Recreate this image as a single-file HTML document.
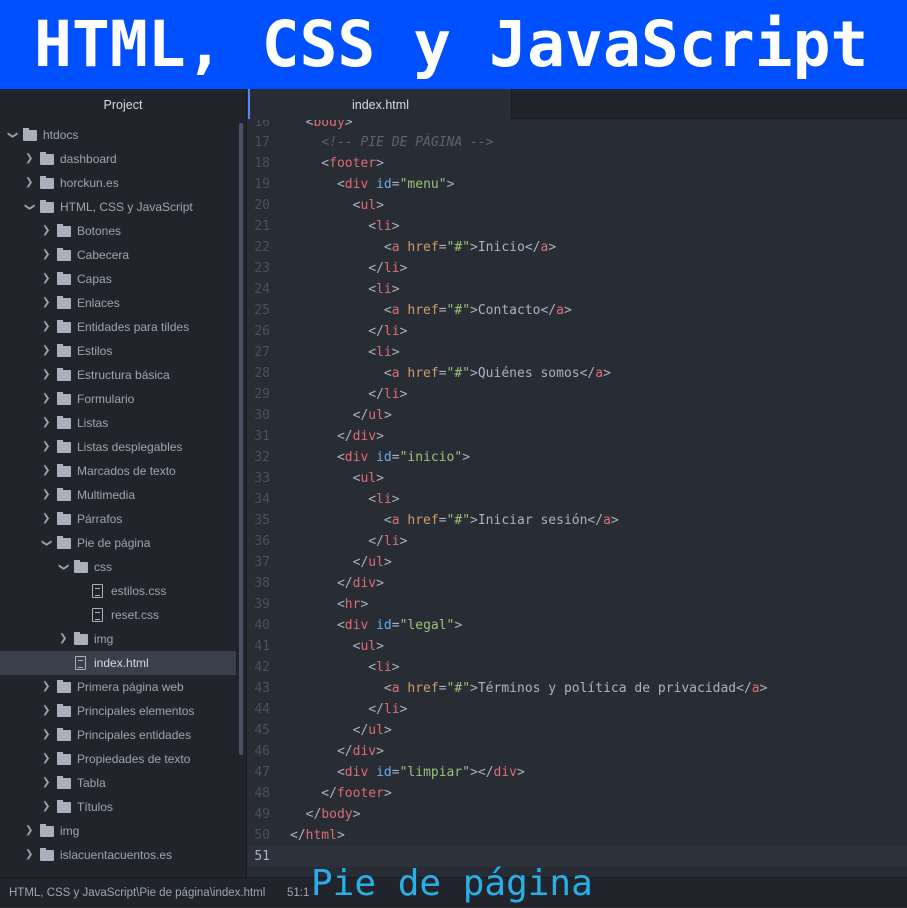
<!DOCTYPE html>
<html><head><meta charset="utf-8"><style>
*{margin:0;padding:0;box-sizing:border-box}
body{width:907px;height:907px;overflow:hidden;background:#282c34;position:relative;font-family:"Liberation Sans",sans-serif}
#top{position:absolute;left:0;top:0;width:907px;height:89px;background:#0050ff;color:#fff;font:bold 63px "DejaVu Sans Mono",monospace;line-height:89px;padding-left:34px;white-space:pre}
#side{position:absolute;left:0;top:89px;width:247px;height:788px;background:#21252b;border-right:1px solid #181a1f}
#side .hd{height:30px;line-height:32px;text-align:center;color:#d7dae0;font-size:12.5px}
.r{position:absolute;left:0;height:24px;width:236px;color:#9da5b4;font-size:12px;line-height:24px;white-space:nowrap}
.r.sel{background:#3a3f4b;color:#d7dae0}
.ar{position:absolute;top:0;color:#9da5b4;font-size:10px}
.fd{position:absolute;top:7px;width:14px;height:11px;background:#a9afbb;border-radius:1px}
.fd:before{content:"";position:absolute;left:0;top:-2px;width:6px;height:3px;background:#a9afbb}
.fl{position:absolute;top:5px;width:11px;height:14px;border:1.3px solid #a9afbb;border-radius:1px}
.fl:after{content:"";position:absolute;left:2px;top:3px;width:5px;height:6px;border-top:1.3px solid #a9afbb;border-bottom:1.3px solid #a9afbb}
.tx{position:absolute;top:0}
#sb{position:absolute;left:239px;top:123px;width:4px;height:632px;background:#4b5263;border-radius:2px}
#tabs{position:absolute;left:248px;top:89px;width:659px;height:30px;background:#21252b}
#tab{position:absolute;left:0;top:0;width:263px;height:30px;background:#282c34;color:#d7dae0;font-size:12.5px;text-align:center;line-height:32px;border-left:2px solid #568af2}
#tabs .rest{position:absolute;left:263px;top:0;right:0;height:30px;border-left:1px solid #181a1f;border-bottom:1px solid #181a1f}
#ed{position:absolute;left:248px;top:120px;width:659px;height:757px;overflow:hidden;font:13px "DejaVu Sans Mono",monospace}
.l{position:absolute;left:0;height:21px;line-height:21px;width:659px;white-space:pre;color:#abb2bf}
.n{position:absolute;left:0;width:22px;text-align:right;color:#495162}
.c{position:absolute;left:42px}
.t{color:#e06c75}.a{color:#d19a66}.i{color:#61afef}.s{color:#98c379}.cm{color:#5c6370;font-style:italic}
.cur{background:#2c313c}.cur .n{color:#abb2bf}
#status{position:absolute;left:0;top:877px;width:907px;height:30px;background:#21252b;border-top:1px solid #181a1f;color:#9da5b4;font-size:11.5px;line-height:30px}
#pie{position:absolute;left:311px;top:860px;color:#29aee8;font:36px "DejaVu Sans Mono",monospace;line-height:48px;white-space:pre}
</style></head><body>
<div id="top">HTML, CSS y JavaScript</div>
<div id="side"><div class="hd">Project</div></div>
<div id="sb"></div>
<div id="tabs"><div id="tab">index.html</div><div class="rest"></div></div>
<div id="rows"></div>
<div id="ed">
<div class="l" style="top:-8px"><span class="n">16</span><span class="c">  &lt;<span class="t">body</span>&gt;</span></div>
<div class="l" style="top:12px"><span class="n">17</span><span class="c">    <span class="cm">&lt;!-- PIE DE PÁGINA --&gt;</span></span></div>
<div class="l" style="top:33px"><span class="n">18</span><span class="c">    &lt;<span class="t">footer</span>&gt;</span></div>
<div class="l" style="top:54px"><span class="n">19</span><span class="c">      &lt;<span class="t">div</span> <span class="i">id</span>=<span class="s">"menu"</span>&gt;</span></div>
<div class="l" style="top:75px"><span class="n">20</span><span class="c">        &lt;<span class="t">ul</span>&gt;</span></div>
<div class="l" style="top:96px"><span class="n">21</span><span class="c">          &lt;<span class="t">li</span>&gt;</span></div>
<div class="l" style="top:117px"><span class="n">22</span><span class="c">            &lt;<span class="t">a</span> <span class="a">href</span>=<span class="s">"#"</span>&gt;Inicio&lt;/<span class="t">a</span>&gt;</span></div>
<div class="l" style="top:138px"><span class="n">23</span><span class="c">          &lt;/<span class="t">li</span>&gt;</span></div>
<div class="l" style="top:159px"><span class="n">24</span><span class="c">          &lt;<span class="t">li</span>&gt;</span></div>
<div class="l" style="top:180px"><span class="n">25</span><span class="c">            &lt;<span class="t">a</span> <span class="a">href</span>=<span class="s">"#"</span>&gt;Contacto&lt;/<span class="t">a</span>&gt;</span></div>
<div class="l" style="top:201px"><span class="n">26</span><span class="c">          &lt;/<span class="t">li</span>&gt;</span></div>
<div class="l" style="top:222px"><span class="n">27</span><span class="c">          &lt;<span class="t">li</span>&gt;</span></div>
<div class="l" style="top:243px"><span class="n">28</span><span class="c">            &lt;<span class="t">a</span> <span class="a">href</span>=<span class="s">"#"</span>&gt;Quiénes somos&lt;/<span class="t">a</span>&gt;</span></div>
<div class="l" style="top:264px"><span class="n">29</span><span class="c">          &lt;/<span class="t">li</span>&gt;</span></div>
<div class="l" style="top:285px"><span class="n">30</span><span class="c">        &lt;/<span class="t">ul</span>&gt;</span></div>
<div class="l" style="top:306px"><span class="n">31</span><span class="c">      &lt;/<span class="t">div</span>&gt;</span></div>
<div class="l" style="top:327px"><span class="n">32</span><span class="c">      &lt;<span class="t">div</span> <span class="i">id</span>=<span class="s">"inicio"</span>&gt;</span></div>
<div class="l" style="top:348px"><span class="n">33</span><span class="c">        &lt;<span class="t">ul</span>&gt;</span></div>
<div class="l" style="top:369px"><span class="n">34</span><span class="c">          &lt;<span class="t">li</span>&gt;</span></div>
<div class="l" style="top:390px"><span class="n">35</span><span class="c">            &lt;<span class="t">a</span> <span class="a">href</span>=<span class="s">"#"</span>&gt;Iniciar sesión&lt;/<span class="t">a</span>&gt;</span></div>
<div class="l" style="top:411px"><span class="n">36</span><span class="c">          &lt;/<span class="t">li</span>&gt;</span></div>
<div class="l" style="top:432px"><span class="n">37</span><span class="c">        &lt;/<span class="t">ul</span>&gt;</span></div>
<div class="l" style="top:453px"><span class="n">38</span><span class="c">      &lt;/<span class="t">div</span>&gt;</span></div>
<div class="l" style="top:474px"><span class="n">39</span><span class="c">      &lt;<span class="t">hr</span>&gt;</span></div>
<div class="l" style="top:495px"><span class="n">40</span><span class="c">      &lt;<span class="t">div</span> <span class="i">id</span>=<span class="s">"legal"</span>&gt;</span></div>
<div class="l" style="top:516px"><span class="n">41</span><span class="c">        &lt;<span class="t">ul</span>&gt;</span></div>
<div class="l" style="top:537px"><span class="n">42</span><span class="c">          &lt;<span class="t">li</span>&gt;</span></div>
<div class="l" style="top:558px"><span class="n">43</span><span class="c">            &lt;<span class="t">a</span> <span class="a">href</span>=<span class="s">"#"</span>&gt;Términos y política de privacidad&lt;/<span class="t">a</span>&gt;</span></div>
<div class="l" style="top:579px"><span class="n">44</span><span class="c">          &lt;/<span class="t">li</span>&gt;</span></div>
<div class="l" style="top:600px"><span class="n">45</span><span class="c">        &lt;/<span class="t">ul</span>&gt;</span></div>
<div class="l" style="top:621px"><span class="n">46</span><span class="c">      &lt;/<span class="t">div</span>&gt;</span></div>
<div class="l" style="top:642px"><span class="n">47</span><span class="c">      &lt;<span class="t">div</span> <span class="i">id</span>=<span class="s">"limpiar"</span>&gt;&lt;/<span class="t">div</span>&gt;</span></div>
<div class="l" style="top:663px"><span class="n">48</span><span class="c">    &lt;/<span class="t">footer</span>&gt;</span></div>
<div class="l" style="top:684px"><span class="n">49</span><span class="c">  &lt;/<span class="t">body</span>&gt;</span></div>
<div class="l" style="top:705px"><span class="n">50</span><span class="c">&lt;/<span class="t">html</span>&gt;</span></div>
<div class="l cur" style="top:726px"><span class="n">51</span><span class="c"></span></div>
</div>
<div id="status"><span style="position:absolute;left:9px">HTML, CSS y JavaScript\Pie de página\index.html</span><span style="position:absolute;left:287px">51:1</span></div>
<div id="pie">Pie de página</div>
<script>
var items=[
[0,'d','htdocs','v'],[1,'d','dashboard','>'],[1,'d','horckun.es','>'],[1,'d','HTML, CSS y JavaScript','v'],
[2,'d','Botones','>'],[2,'d','Cabecera','>'],[2,'d','Capas','>'],[2,'d','Enlaces','>'],[2,'d','Entidades para tildes','>'],
[2,'d','Estilos','>'],[2,'d','Estructura básica','>'],[2,'d','Formulario','>'],[2,'d','Listas','>'],[2,'d','Listas desplegables','>'],
[2,'d','Marcados de texto','>'],[2,'d','Multimedia','>'],[2,'d','Párrafos','>'],[2,'d','Pie de página','v'],
[3,'d','css','v'],[4,'f','estilos.css',''],[4,'f','reset.css',''],[3,'d','img','>'],[3,'f','index.html','',1],
[2,'d','Primera página web','>'],[2,'d','Principales elementos','>'],[2,'d','Principales entidades','>'],[2,'d','Propiedades de texto','>'],
[2,'d','Tabla','>'],[2,'d','Títulos','>'],[1,'d','img','>'],[1,'d','islacuentacuentos.es','>']];
var h='';
items.forEach(function(it,k){
 var d=it[0],x=d*17,y=123+k*24;
 h+='<div class="r'+(it[4]?' sel':'')+'" style="top:'+y+'px">';
 if(it[3]) h+='<span class="ar" style="left:'+(x+8)+'px;'+(it[3]=='v'?'transform:rotate(90deg);':'')+'">❯</span>';
 if(it[1]=='d') h+='<span class="fd" style="left:'+(x+23)+'px"></span>'; else h+='<span class="fl" style="left:'+(x+24)+'px"></span>';
 h+='<span class="tx" style="left:'+(x+43)+'px">'+it[2]+'</span></div>';
});
document.getElementById('rows').innerHTML=h;
</script>
</body></html>
